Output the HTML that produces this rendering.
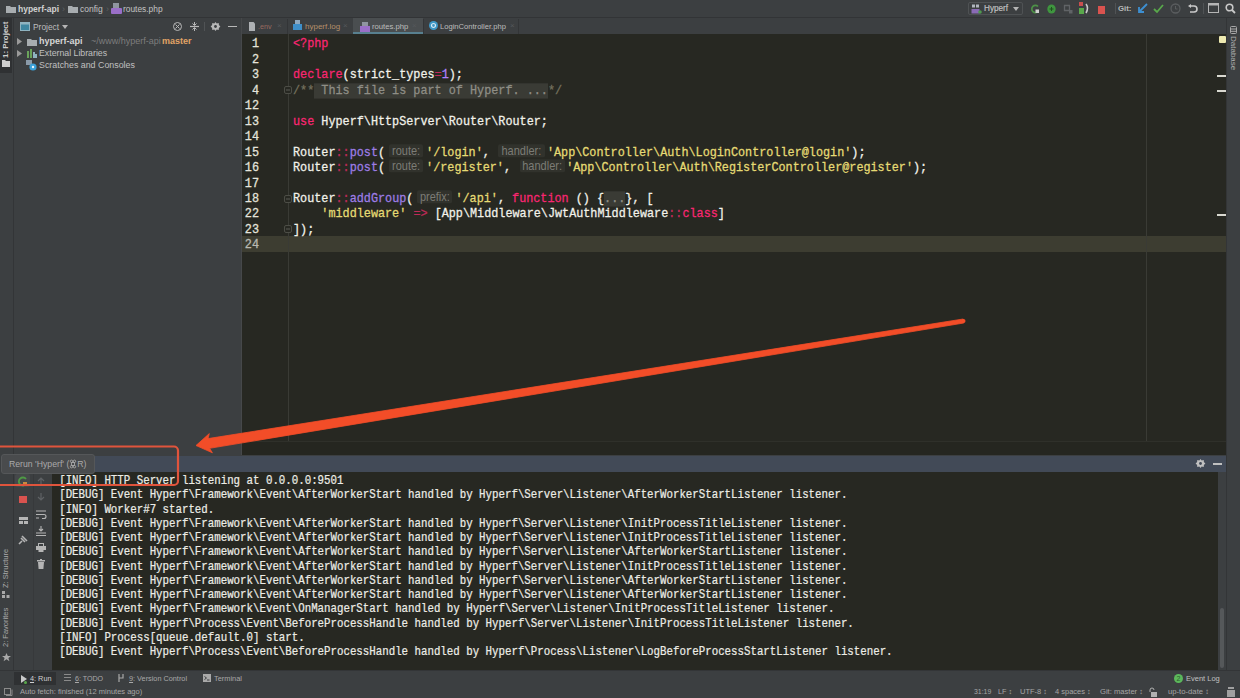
<!DOCTYPE html>
<html><head><meta charset="utf-8"><style>
*{margin:0;padding:0;box-sizing:border-box}
html,body{width:1240px;height:698px;overflow:hidden;background:#3c3f41;font-family:"Liberation Sans",sans-serif;color:#bbbbbb;position:relative}
.a{position:absolute}
.ui{white-space:nowrap;line-height:12px;font-size:9px}
.code,.ln{font-family:"Liberation Mono",monospace;font-size:11.8px;white-space:pre;color:#f2f2ea;line-height:15px;transform:scaleY(1.09);transform-origin:0 50%;-webkit-text-stroke:0.25px}
.ln{color:#e4e4dc;text-align:right;width:40px}
.k{color:#f92672}
.s{color:#e6db74}
.f{color:#9e7de6}
.n{color:#ae81ff}
.c{color:#75715e}
.fold{background:#3a3b35;color:#8f8e86}
.hint{display:inline-block;font-family:"Liberation Sans",sans-serif;font-size:11px;color:#7c7c76;background:#31322c;border-radius:2px;height:12px;line-height:12px;vertical-align:top;text-align:center;-webkit-text-stroke:0;position:relative;top:-0.8px}
.o{color:#bf2a58}
.con{font-family:"Liberation Mono",monospace;font-size:10.78px;white-space:pre;color:#ecece6;line-height:14px;transform:scaleY(1.2);transform-origin:0 50%;-webkit-text-stroke:0.2px}
svg{position:absolute;overflow:visible}
</style></head><body>
<div class="a" style="left:0px;top:0px;width:1240px;height:17px;background:#3c3f41;"></div>
<div class="a" style="left:0px;top:17px;width:1240px;height:1px;background:#323436;"></div>
<div class="a" style="left:0px;top:18px;width:13px;height:652px;background:#3c3f41;"></div>
<div class="a" style="left:13px;top:18px;width:1px;height:652px;background:#333537;"></div>
<div class="a" style="left:241px;top:18px;width:1px;height:437px;background:#46484a;"></div>
<div class="a" style="left:242px;top:18px;width:984px;height:16px;background:#3c3f41;"></div>
<div class="a" style="left:242px;top:34px;width:984px;height:421px;background:#272822;"></div>
<div class="a" style="left:1226px;top:18px;width:14px;height:668px;background:#3c3f41;"></div>
<div class="a" style="left:1226px;top:18px;width:1px;height:652px;background:#333537;"></div>
<div class="a" style="left:13px;top:455.5px;width:1213px;height:16.5px;background:#424a57;"></div>
<div class="a" style="left:14px;top:472px;width:38px;height:198px;background:#3c3f41;"></div>
<div class="a" style="left:33px;top:472px;width:1px;height:198px;background:#37393b;"></div>
<div class="a" style="left:52px;top:472px;width:1166px;height:198px;background:#272822;"></div>
<div class="a" style="left:1218px;top:472px;width:8px;height:198px;background:#3c3f41;"></div>
<div class="a" style="left:1220px;top:608px;width:4px;height:60px;background:#55585a;border-radius:2px"></div>
<div class="a" style="left:0px;top:670px;width:1240px;height:1px;background:#333537;"></div>
<svg style="left:6px;top:5px" width="10" height="8" viewBox="0 0 10 8"><path d="M0 1h4l1 1h5v6H0z" fill="#a8adb0"/></svg>
<div class="a ui" style="left:18px;top:2.5px;font-size:8.5px;color:#d2d2d2;font-weight:bold">hyperf-api</div>
<div class="a ui" style="left:62px;top:2.5px;font-size:9px;color:#5e6164;">&#x203A;</div>
<svg style="left:68px;top:5px" width="10" height="8" viewBox="0 0 10 8"><path d="M0 1h4l1 1h5v6H0z" fill="#a8adb0"/></svg>
<div class="a ui" style="left:80px;top:2.5px;font-size:8.5px;color:#c2c2c2;">config</div>
<div class="a ui" style="left:106px;top:2.5px;font-size:9px;color:#5e6164;">&#x203A;</div>
<svg style="left:111px;top:3px" width="11" height="11" viewBox="0 0 11 11"><rect x="2" y="0" width="6" height="6" fill="#8f95a0"/><rect x="0" y="5" width="11" height="6" rx="1" fill="#9a6fc8"/></svg>
<div class="a ui" style="left:123px;top:2.5px;font-size:8.4px;color:#c2c2c2;">routes.php</div>
<div class="a" style="left:968px;top:2px;width:55px;height:13px;background:transparent;border:1px solid #4f5254;border-radius:2px"></div>
<svg style="left:971px;top:4px" width="11" height="10" viewBox="0 0 11 10"><rect x="1" y="0.5" width="3" height="3" fill="#b0b6bd"/><rect x="5" y="0.5" width="3" height="3" fill="#b0b6bd"/><rect x="0.5" y="5" width="8" height="4.5" fill="#8a6bb5"/><circle cx="9" cy="8" r="1.8" fill="#4f9a4f"/></svg>
<div class="a ui" style="left:984px;top:2.5px;font-size:8.2px;color:#c4c4c4;-webkit-text-stroke:0.15px">Hyperf</div>
<svg style="left:1013px;top:7px" width="6" height="4" viewBox="0 0 6 4"><path d="M0 0h6L3 4z" fill="#b5b5b5"/></svg>
<svg style="left:1030px;top:4px" width="10" height="10" viewBox="0 0 10 10"><path d="M8 2.5A3.6 3.6 0 1 0 8 7.5" stroke="#4d9147" stroke-width="1.7" fill="none"/><rect x="5.5" y="5.5" width="3.5" height="3.5" fill="#d0d0d0"/></svg>
<svg style="left:1047px;top:4px" width="9" height="10" viewBox="0 0 9 10"><ellipse cx="4.5" cy="5" rx="4.2" ry="4.6" fill="#3f963f"/><path d="M2.5 5h4M4.5 3v4" stroke="#1f4f1f" stroke-width="1"/></svg>
<svg style="left:1064px;top:5px" width="9" height="9" viewBox="0 0 9 9"><path d="M0.5 0.5h5v5h-5z" stroke="#606366" stroke-width="1.3" fill="none"/><rect x="5" y="5" width="3.5" height="3.5" fill="#606366"/></svg>
<svg style="left:1078px;top:2px" width="12" height="13" viewBox="0 0 12 13"><rect x="1" y="0" width="4" height="4" fill="#c94f4f"/><rect x="1" y="6" width="5" height="6" fill="#59a84b"/><path d="M8 2q3 4 0 9" stroke="#c9c9c9" stroke-width="1.6" fill="none"/></svg>
<div class="a" style="left:1097.5px;top:6px;width:7.5px;height:7.5px;background:#d9534f;"></div>
<div class="a" style="left:1115px;top:3px;width:1px;height:11px;background:#505355;"></div>
<div class="a ui" style="left:1118px;top:2.5px;font-size:7.8px;color:#b8b8b8;font-weight:bold">Git:</div>
<svg style="left:1137px;top:3px" width="11" height="11" viewBox="0 0 11 11"><path d="M10 1L2 9M2 4v5h5" stroke="#3d8fd1" stroke-width="1.8" fill="none"/></svg>
<svg style="left:1153px;top:3px" width="11" height="11" viewBox="0 0 11 11"><path d="M1 6l3 3 6-7" stroke="#59a84b" stroke-width="1.8" fill="none"/></svg>
<svg style="left:1170px;top:3px" width="11" height="11" viewBox="0 0 11 11"><circle cx="5.5" cy="5.5" r="4.5" stroke="#5a5d5f" stroke-width="1.3" fill="none"/><path d="M5.5 3v3h2" stroke="#5a5d5f" fill="none"/></svg>
<svg style="left:1187px;top:3px" width="11" height="11" viewBox="0 0 11 11"><path d="M3 3h4a3 3 0 0 1 0 6H3" stroke="#c9c9c9" stroke-width="1.6" fill="none"/><path d="M1 3l3-2v4z" fill="#c9c9c9"/></svg>
<div class="a" style="left:1203px;top:3px;width:1px;height:11px;background:#505355;"></div>
<svg style="left:1208px;top:3px" width="11" height="10" viewBox="0 0 11 10"><rect x="0.5" y="0.5" width="10" height="9" stroke="#b5b5b5" fill="none"/><rect x="0.5" y="0.5" width="10" height="2" fill="#b5b5b5"/></svg>
<svg style="left:1225px;top:3px" width="11" height="11" viewBox="0 0 11 11"><circle cx="4.5" cy="4.5" r="3.3" stroke="#c9c9c9" stroke-width="1.6" fill="none"/><path d="M7 7l3 3" stroke="#c9c9c9" stroke-width="1.8"/></svg>
<div class="a" style="left:0px;top:18px;width:12px;height:55px;background:#2f3133;"></div>
<svg style="left:2px;top:60px" width="8" height="7" viewBox="0 0 8 7"><path d="M0 0h3l1 1h4v6H0z" fill="#cfcfcf"/></svg>
<div class="a ui" style="left:1px;top:58px;width:40px;font-size:8px;color:#cfcfcf;transform:rotate(-90deg);transform-origin:0 0;line-height:10px;font-weight:bold">1: Project</div>
<div class="a ui" style="left:1px;top:588px;width:50px;font-size:7.5px;color:#a9a9a9;transform:rotate(-90deg);transform-origin:0 0;line-height:10px">Z: Structure</div>
<svg style="left:2px;top:591px" width="8" height="7" viewBox="0 0 8 7"><rect x="0" y="0" width="3" height="3" fill="#a9a9a9"/><rect x="0" y="4" width="3" height="3" fill="#a9a9a9"/><rect x="4.5" y="4" width="3" height="3" fill="#a9a9a9"/></svg>
<div class="a ui" style="left:1px;top:647px;width:50px;font-size:7.5px;color:#a9a9a9;transform:rotate(-90deg);transform-origin:0 0;line-height:10px">2: Favorites</div>
<svg style="left:2px;top:653px" width="9" height="9" viewBox="0 0 9 9"><path d="M4.5 0l1.3 3h3.2l-2.6 2 1 3.3-2.9-2-2.9 2 1-3.3L0 3h3.2z" fill="#a9a9a9"/></svg>
<svg style="left:20px;top:22px" width="10" height="9" viewBox="0 0 10 9"><rect x="0.5" y="0.5" width="9" height="8" fill="#3e86a0" stroke="#8fb3c0"/><rect x="1" y="1" width="8" height="1.5" fill="#8fb3c0"/></svg>
<div class="a ui" style="left:33px;top:20.5px;font-size:8.4px;color:#bdbdbd;">Project</div>
<svg style="left:62px;top:25px" width="6" height="4" viewBox="0 0 6 4"><path d="M0 0h6L3 4z" fill="#b5b5b5"/></svg>
<svg style="left:173px;top:22px" width="9" height="9" viewBox="0 0 9 9"><circle cx="4.5" cy="4.5" r="4" stroke="#b8b8b8" stroke-width="1" fill="none"/><path d="M2.5 2.5l4 4M6.5 2.5l-4 4" stroke="#b8b8b8"/></svg>
<svg style="left:190px;top:22px" width="9" height="9" viewBox="0 0 9 9"><path d="M0 4.5h9" stroke="#b8b8b8" stroke-width="1.2"/><path d="M4.5 0v3M2.5 1.5l2 2 2-2M4.5 9v-3M2.5 7.5l2-2 2 2" stroke="#b8b8b8" fill="none"/></svg>
<div class="a" style="left:204px;top:22px;width:1px;height:9px;background:#505355;"></div>
<svg style="left:211px;top:22px" width="9" height="9" viewBox="0 0 9 9"><path d="M4.5 0l1.2 1.6 2-.5.2 2 1.5 1.4-1.5 1.4-.2 2-2-.5L4.5 9 3.3 7.4l-2 .5-.2-2L-.4 4.5l1.5-1.4.2-2 2 .5z" fill="#b8b8b8"/><circle cx="4.5" cy="4.5" r="1.4" fill="#3c3f41"/></svg>
<div class="a" style="left:228px;top:26px;width:9px;height:1.3px;background:#b8b8b8;"></div>
<svg style="left:17px;top:38px" width="5" height="7" viewBox="0 0 5 7"><path d="M0 0l5 3.5L0 7z" fill="#9a9a9a"/></svg>
<svg style="left:27px;top:37.5px" width="10" height="8" viewBox="0 0 10 8"><path d="M0 1h4l1 1h5v6H0z" fill="#a8adb0"/></svg>
<div class="a ui" style="left:39px;top:35px;font-size:9px;color:#d6d6d6;font-weight:bold">hyperf-api</div>
<div class="a ui" style="left:91px;top:35px;font-size:9px;color:#7d7d7d;">~/www/hyperf-api</div>
<div class="a ui" style="left:162px;top:35px;font-size:9px;color:#e2a466;font-weight:bold">master</div>
<svg style="left:17px;top:50px" width="5" height="7" viewBox="0 0 5 7"><path d="M0 0l5 3.5L0 7z" fill="#9a9a9a"/></svg>
<svg style="left:27px;top:49px" width="10" height="9" viewBox="0 0 10 9"><rect x="0" y="2" width="2" height="7" fill="#6aa35b"/><rect x="3" y="0" width="2" height="9" fill="#6aa35b"/><rect x="6" y="3" width="2" height="6" fill="#8fb3c0"/><rect x="8" y="5" width="2" height="4" fill="#8fb3c0"/></svg>
<div class="a ui" style="left:39px;top:47px;font-size:8.75px;color:#c0c0c0;">External Libraries</div>
<svg style="left:26px;top:60px" width="11" height="11" viewBox="0 0 11 11"><rect x="0" y="0" width="6" height="5" fill="#8a9aa8"/><circle cx="7" cy="7" r="3.6" fill="#3aa0d8"/><circle cx="7" cy="7" r="1.2" fill="#e8f4fb"/></svg>
<div class="a ui" style="left:39px;top:59px;font-size:8.85px;color:#c0c0c0;">Scratches and Consoles</div>
<div class="a" style="left:287px;top:19px;width:1px;height:15px;background:#333537;"></div>
<svg style="left:249px;top:22px" width="6" height="9" viewBox="0 0 6 9"><path d="M0 0h4.5l1.5 1.5V9H0z" fill="#aeb1b4"/></svg>
<div class="a ui" style="left:258px;top:20.6px;font-size:7.2px;color:#9a6a60;">.env</div>
<div class="a ui" style="left:277px;top:20px;font-size:8px;color:#55585b;">&#xD7;</div>
<div class="a" style="left:353px;top:19px;width:1px;height:15px;background:#333537;"></div>
<svg style="left:293px;top:20px" width="9" height="10" viewBox="0 0 9 10"><rect x="2" y="0" width="5" height="4" fill="#8fa9c0"/><rect x="0" y="4" width="9" height="6" fill="#3f8fc9"/></svg>
<div class="a ui" style="left:305px;top:20.6px;font-size:8.0px;color:#b58f6a;">hyperf.log</div>
<div class="a ui" style="left:343px;top:20px;font-size:8px;color:#55585b;">&#xD7;</div>
<div class="a" style="left:353px;top:18px;width:70px;height:16px;background:#4a4e50;"></div>
<div class="a" style="left:353px;top:32px;width:70px;height:2px;background:#58808f;"></div>
<div class="a" style="left:423px;top:19px;width:1px;height:15px;background:#333537;"></div>
<svg style="left:360px;top:21.5px" width="10" height="10" viewBox="0 0 10 10"><rect x="2" y="0" width="6" height="4" fill="#8f95a0"/><rect x="0" y="4" width="10" height="6" fill="#9a6fc8"/></svg>
<div class="a ui" style="left:372px;top:20.6px;font-size:7.7px;color:#bdbdbd;">routes.php</div>
<div class="a ui" style="left:412px;top:20px;font-size:8px;color:#55585b;">&#xD7;</div>
<div class="a" style="left:518px;top:19px;width:1px;height:15px;background:#333537;"></div>
<svg style="left:429px;top:21px" width="9" height="9" viewBox="0 0 9 9"><circle cx="4.5" cy="4.5" r="4.5" fill="#3e97c6"/><circle cx="4.5" cy="4.5" r="2" fill="none" stroke="#d8eaf4" stroke-width="1.2"/></svg>
<div class="a ui" style="left:440px;top:20.6px;font-size:7.6px;color:#bdbdbd;">LoginController.php</div>
<div class="a ui" style="left:510px;top:20px;font-size:8px;color:#55585b;">&#xD7;</div>
<div class="a" style="left:242px;top:236.28px;width:984px;height:15.4px;background:#3d3d31;"></div>
<div class="a" style="left:288px;top:34px;width:1px;height:407px;background:#3a3b35;"></div>
<div class="a" style="left:1146px;top:34px;width:1px;height:407px;background:#3a3b35;"></div>
<div class="a" style="left:242px;top:441px;width:984px;height:1px;background:#2f302a;"></div>
<div class="a" style="left:242px;top:442px;width:984px;height:13px;background:#252620;"></div>
<div class="a ln" style="top:37.40px;left:219px;">1</div>
<div class="a code" style="top:37.40px;left:293px"><span class="k">&lt;?php</span></div>
<div class="a ln" style="top:52.86px;left:219px;">2</div>
<div class="a ln" style="top:68.32px;left:219px;">3</div>
<div class="a code" style="top:68.32px;left:293px"><span class="k">declare</span>(strict_types<span class="o">=</span><span class="n">1</span>);</div>
<div class="a ln" style="top:83.78px;left:219px;">4</div>
<div class="a code" style="top:83.78px;left:293px"><span class="c">/**<span class="fold"> This file is part of Hyperf. ...</span>*/</span></div>
<div class="a ln" style="top:99.24px;left:219px;">12</div>
<div class="a ln" style="top:114.70px;left:219px;">13</div>
<div class="a code" style="top:114.70px;left:293px"><span class="k">use</span> Hyperf\HttpServer\Router\Router;</div>
<div class="a ln" style="top:130.16px;left:219px;">14</div>
<div class="a ln" style="top:145.62px;left:219px;">15</div>
<div class="a code" style="top:145.62px;left:293px">Router<span class="o">::</span><span class="f">post</span>(<span class="hint" style="width:34px;margin:0 3px 0 4px">route:</span><span class="s">'/login'</span>, <span class="hint" style="width:47px;margin:0 2px 0 1px">handler:</span><span class="s">'App\Controller\Auth\LoginController@login'</span>);</div>
<div class="a ln" style="top:161.08px;left:219px;">16</div>
<div class="a code" style="top:161.08px;left:293px">Router<span class="o">::</span><span class="f">post</span>(<span class="hint" style="width:34px;margin:0 3px 0 4px">route:</span><span class="s">'/register'</span>, <span class="hint" style="width:45px;margin:0 1.5px 0 1.5px">handler:</span><span class="s">'App\Controller\Auth\RegisterController@register'</span>);</div>
<div class="a ln" style="top:176.54px;left:219px;">17</div>
<div class="a ln" style="top:192.00px;left:219px;">18</div>
<div class="a code" style="top:192.00px;left:293px">Router<span class="o">::</span><span class="f">addGroup</span>(<span class="hint" style="width:35px;margin:0 3px 0 4px">prefix:</span><span class="s">'/api'</span>, <span class="k">function</span> () {<span class="fold">...</span>}, [</div>
<div class="a ln" style="top:207.46px;left:219px;">22</div>
<div class="a code" style="top:207.46px;left:293px">    <span class="s">'middleware'</span> <span class="o">=&gt;</span> [App\Middleware\JwtAuthMiddleware<span class="o">::</span><span class="k">class</span>]</div>
<div class="a ln" style="top:222.92px;left:219px;">23</div>
<div class="a code" style="top:222.92px;left:293px">]);</div>
<div class="a ln" style="top:238.38px;left:219px;color:#b9b9b1">24</div>
<svg style="left:284px;top:86.28px" width="8" height="8" viewBox="0 0 8 8"><rect x="0.5" y="0.5" width="7" height="7" rx="1.5" fill="#272822" stroke="#4c4d46"/><path d="M2 4h4" stroke="#5a5b54"/></svg>
<svg style="left:284px;top:194.50000000000003px" width="8" height="8" viewBox="0 0 8 8"><rect x="0.5" y="0.5" width="7" height="7" rx="1.5" fill="#272822" stroke="#4c4d46"/><path d="M2 4h4" stroke="#5a5b54"/></svg>
<svg style="left:284px;top:225.42000000000002px" width="8" height="8" viewBox="0 0 8 8"><rect x="0.5" y="0.5" width="7" height="7" rx="1.5" fill="#272822" stroke="#4c4d46"/><path d="M2 4h4" stroke="#5a5b54"/></svg>
<div class="a" style="left:1219px;top:35.5px;width:7px;height:7px;background:#ede9b0;border-radius:1px"></div>
<div class="a" style="left:1217px;top:75px;width:9px;height:1.5px;background:#d8d8d0;"></div>
<div class="a" style="left:1217px;top:90px;width:9px;height:1.5px;background:#d8d8d0;"></div>
<div class="a" style="left:1217px;top:214px;width:9px;height:1.5px;background:#d8d8d0;"></div>
<svg style="left:1230px;top:25.5px" width="7" height="8" viewBox="0 0 7 8"><rect x="0.5" y="0.5" width="6" height="7" rx="1" stroke="#a9a9a9" fill="none"/><path d="M0.5 3h6M0.5 5.3h6" stroke="#a9a9a9"/></svg>
<div class="a ui" style="left:1237.8px;top:36px;width:40px;font-size:8px;color:#b0b0b0;transform:rotate(90deg);transform-origin:0 0;line-height:10px">Database</div>
<div class="a" style="left:1195px;top:459px;width:10px;height:10px;background:transparent;"></div>
<svg style="left:1196px;top:459px" width="9" height="9" viewBox="0 0 9 9"><path d="M4.5 0l1.2 1.6 2-.5.2 2 1.5 1.4-1.5 1.4-.2 2-2-.5L4.5 9 3.3 7.4l-2 .5-.2-2L-.4 4.5l1.5-1.4.2-2 2 .5z" fill="#c0c0c0"/><circle cx="4.5" cy="4.5" r="1.4" fill="#424a57"/></svg>
<div class="a" style="left:1213px;top:463px;width:9px;height:1.5px;background:#c0c0c0;"></div>
<div class="a" style="left:1px;top:454px;width:94px;height:20px;background:#494b4d;border:1px solid #555759;border-radius:3px"></div>
<div class="a ui" style="left:9px;top:458px;font-size:8.7px;color:#a9a9a9;">Rerun 'Hyperf' (<svg style="position:relative;display:inline-block;vertical-align:-1px" width="8" height="8" viewBox="0 0 8 8"><path d="M2.5 2.5h3v3h-3zM2.5 2.5A1.2 1.2 0 1 0 1.3 1.3 1.2 1.2 0 0 0 2.5 2.5M5.5 2.5A1.2 1.2 0 1 1 6.7 1.3 1.2 1.2 0 0 1 5.5 2.5M2.5 5.5A1.2 1.2 0 1 1 1.3 6.7 1.2 1.2 0 0 1 2.5 5.5M5.5 5.5A1.2 1.2 0 1 0 6.7 6.7 1.2 1.2 0 0 0 5.5 5.5" stroke="#a9a9a9" stroke-width="0.9" fill="none"/></svg>R)</div>
<div class="a" style="left:15px;top:474px;width:15px;height:13px;background:#45484a;border-radius:2px"></div>
<svg style="left:17px;top:476px" width="11" height="11" viewBox="0 0 11 11"><path d="M9 3A4 4 0 1 0 9 8" stroke="#4f9a45" stroke-width="1.8" fill="none"/><rect x="6" y="6" width="4" height="4" fill="#c98a40"/></svg>
<div class="a" style="left:19px;top:495.5px;width:7.5px;height:7.5px;background:#d9534f;"></div>
<svg style="left:18.5px;top:516.5px" width="9" height="7" viewBox="0 0 9 7"><rect x="0" y="0" width="9" height="3" fill="#b5b5b5"/><rect x="0" y="4" width="4" height="3" fill="#b5b5b5"/><rect x="5" y="4" width="4" height="3" fill="#b5b5b5"/></svg>
<svg style="left:17px;top:535px" width="10" height="10" viewBox="0 0 10 10"><path d="M2 9l3-3M4 3l4 4M5 1l5 5" stroke="#b5b5b5" stroke-width="1.6"/></svg>
<svg style="left:37px;top:477px" width="8" height="8" viewBox="0 0 8 8"><path d="M4 8V1M1 4l3-3 3 3" stroke="#5f6265" stroke-width="1.2" fill="none"/></svg>
<svg style="left:37px;top:493px" width="8" height="8" viewBox="0 0 8 8"><path d="M4 0v7M1 4l3 3 3-3" stroke="#5f6265" stroke-width="1.2" fill="none"/></svg>
<svg style="left:36px;top:510px" width="10" height="9" viewBox="0 0 10 9"><path d="M0 1h10M0 4.5h8a2 2 0 0 1 0 4H6M0 8h3" stroke="#b5b5b5" stroke-width="1.1" fill="none"/></svg>
<svg style="left:36px;top:526px" width="10" height="10" viewBox="0 0 10 10"><path d="M5 0v5M3 3l2 2 2-2M0 7h10M0 9.5h10" stroke="#b5b5b5" stroke-width="1.1" fill="none"/></svg>
<svg style="left:36px;top:543px" width="10" height="9" viewBox="0 0 10 9"><rect x="2.5" y="0.5" width="5" height="3" stroke="#b5b5b5" fill="none"/><rect x="0" y="3" width="10" height="4" fill="#b5b5b5"/><rect x="2.5" y="6" width="5" height="3" fill="#b5b5b5"/></svg>
<svg style="left:37px;top:559px" width="8" height="10" viewBox="0 0 8 10"><rect x="0" y="1" width="8" height="1.5" fill="#b5b5b5"/><rect x="3" y="0" width="2" height="1" fill="#b5b5b5"/><path d="M1 3h6l-.6 7H1.6z" fill="#b5b5b5"/></svg>
<div class="a con" style="top:473.00px;left:59.2px">[INFO] HTTP Server listening at 0.0.0.0:9501</div>
<div class="a con" style="top:487.25px;left:59.2px">[DEBUG] Event Hyperf\Framework\Event\AfterWorkerStart handled by Hyperf\Server\Listener\AfterWorkerStartListener listener.</div>
<div class="a con" style="top:501.50px;left:59.2px">[INFO] Worker#7 started.</div>
<div class="a con" style="top:515.75px;left:59.2px">[DEBUG] Event Hyperf\Framework\Event\AfterWorkerStart handled by Hyperf\Server\Listener\InitProcessTitleListener listener.</div>
<div class="a con" style="top:530.00px;left:59.2px">[DEBUG] Event Hyperf\Framework\Event\AfterWorkerStart handled by Hyperf\Server\Listener\InitProcessTitleListener listener.</div>
<div class="a con" style="top:544.25px;left:59.2px">[DEBUG] Event Hyperf\Framework\Event\AfterWorkerStart handled by Hyperf\Server\Listener\AfterWorkerStartListener listener.</div>
<div class="a con" style="top:558.50px;left:59.2px">[DEBUG] Event Hyperf\Framework\Event\AfterWorkerStart handled by Hyperf\Server\Listener\InitProcessTitleListener listener.</div>
<div class="a con" style="top:572.75px;left:59.2px">[DEBUG] Event Hyperf\Framework\Event\AfterWorkerStart handled by Hyperf\Server\Listener\AfterWorkerStartListener listener.</div>
<div class="a con" style="top:587.00px;left:59.2px">[DEBUG] Event Hyperf\Framework\Event\AfterWorkerStart handled by Hyperf\Server\Listener\AfterWorkerStartListener listener.</div>
<div class="a con" style="top:601.25px;left:59.2px">[DEBUG] Event Hyperf\Framework\Event\OnManagerStart handled by Hyperf\Server\Listener\InitProcessTitleListener listener.</div>
<div class="a con" style="top:615.50px;left:59.2px">[DEBUG] Event Hyperf\Process\Event\BeforeProcessHandle handled by Hyperf\Server\Listener\InitProcessTitleListener listener.</div>
<div class="a con" style="top:629.75px;left:59.2px">[INFO] Process[queue.default.0] start.</div>
<div class="a con" style="top:644.00px;left:59.2px">[DEBUG] Event Hyperf\Process\Event\BeforeProcessHandle handled by Hyperf\Process\Listener\LogBeforeProcessStartListener listener.</div>
<div class="a" style="left:14px;top:672px;width:42px;height:13px;background:#2f3133;"></div>
<svg style="left:21px;top:675px" width="6" height="8" viewBox="0 0 6 8"><path d="M0 0l6 4-6 4z" fill="#c8c8c8"/></svg>
<div class="a" style="left:24px;top:681px;width:3px;height:3px;background:#59a84b;border-radius:2px"></div>
<div class="a ui" style="left:30px;top:672.5px;font-size:7.3px;color:#d0d0d0;"><u>4</u>: Run</div>
<svg style="left:64px;top:674px" width="7" height="7" viewBox="0 0 7 7"><path d="M0 .5h7M0 3.5h7M0 6.5h7" stroke="#8a8a8a"/></svg>
<div class="a ui" style="left:75px;top:672.5px;font-size:7.1px;color:#a9a9a9;"><u>6</u>: TODO</div>
<svg style="left:118px;top:674px" width="7" height="8" viewBox="0 0 7 8"><path d="M1 0v8M1 4h4V0" stroke="#a9a9a9" stroke-width="1.2" fill="none"/></svg>
<div class="a ui" style="left:129px;top:672.5px;font-size:7.3px;color:#a9a9a9;"><u>9</u>: Version Control</div>
<svg style="left:203px;top:674px" width="8" height="8" viewBox="0 0 8 8"><rect x="0" y="0" width="8" height="8" fill="#a9a9a9"/><path d="M1.5 2.5l2 1.5-2 1.5M4 6h2.5" stroke="#3c3f41" fill="none"/></svg>
<div class="a ui" style="left:214px;top:672.5px;font-size:7.4px;color:#a9a9a9;">Terminal</div>
<svg style="left:1174px;top:674px" width="9" height="9" viewBox="0 0 9 9"><circle cx="4.5" cy="4.5" r="4.5" fill="#5cb85c"/><text x="4.5" y="7.2" font-size="7" text-anchor="middle" fill="#2a5e2a" font-family="Liberation Sans">2</text></svg>
<div class="a ui" style="left:1186px;top:672.5px;font-size:7.5px;color:#c0c0c0;">Event Log</div>
<svg style="left:4px;top:688px" width="8" height="8" viewBox="0 0 8 8"><rect x="0.5" y="0.5" width="6" height="6" stroke="#8a8a8a" fill="none"/><path d="M2 7.5h6v-6" stroke="#8a8a8a" fill="none"/></svg>
<div class="a ui" style="left:20px;top:686px;font-size:7.5px;color:#a6a6a6;">Auto fetch: finished (12 minutes ago)</div>
<div class="a ui" style="left:974px;top:686px;font-size:6.9px;color:#a6a6a6;">31:19</div>
<div class="a ui" style="left:998px;top:686px;font-size:7.3px;color:#a6a6a6;">LF &#x2195;</div>
<div class="a ui" style="left:1020px;top:686px;font-size:7.5px;color:#a6a6a6;">UTF-8 &#x2195;</div>
<div class="a ui" style="left:1055px;top:686px;font-size:7.5px;color:#a6a6a6;">4 spaces &#x2195;</div>
<div class="a ui" style="left:1100px;top:686px;font-size:7.6px;color:#a6a6a6;">Git: master &#x2195;</div>
<svg style="left:1149px;top:688px" width="8" height="9" viewBox="0 0 8 9"><path d="M1 4V2a2 2 0 0 1 4 0" stroke="#b0b0b0" fill="none"/><rect x="2" y="4" width="6" height="5" fill="#b0b0b0"/></svg>
<div class="a ui" style="left:1168px;top:686px;font-size:7.7px;color:#a6a6a6;">up-to-date &#x2195;</div>
<svg style="left:1227px;top:687px" width="8" height="10" viewBox="0 0 8 10"><rect x="1" y="0" width="6" height="2" fill="#a0a0a0"/><rect x="0" y="3" width="8" height="7" fill="#a0a0a0"/></svg>
<svg style="left:0;top:0" width="1240" height="698"><rect x="-4" y="446.5" width="182" height="38.5" rx="4" fill="none" stroke="#e0543c" stroke-width="2.2"/><polygon points="196.0,445.5 212.4,452.8 209.6,448.3 963.8,323.0 963.2,319.0 208.0,438.6 209.3,433.6" fill="#f24d28" stroke="#f24d28" stroke-width="0.8" stroke-linejoin="round"/><circle cx="963.5" cy="321.0" r="2.0" fill="#f24d28"/></svg>
</body></html>
